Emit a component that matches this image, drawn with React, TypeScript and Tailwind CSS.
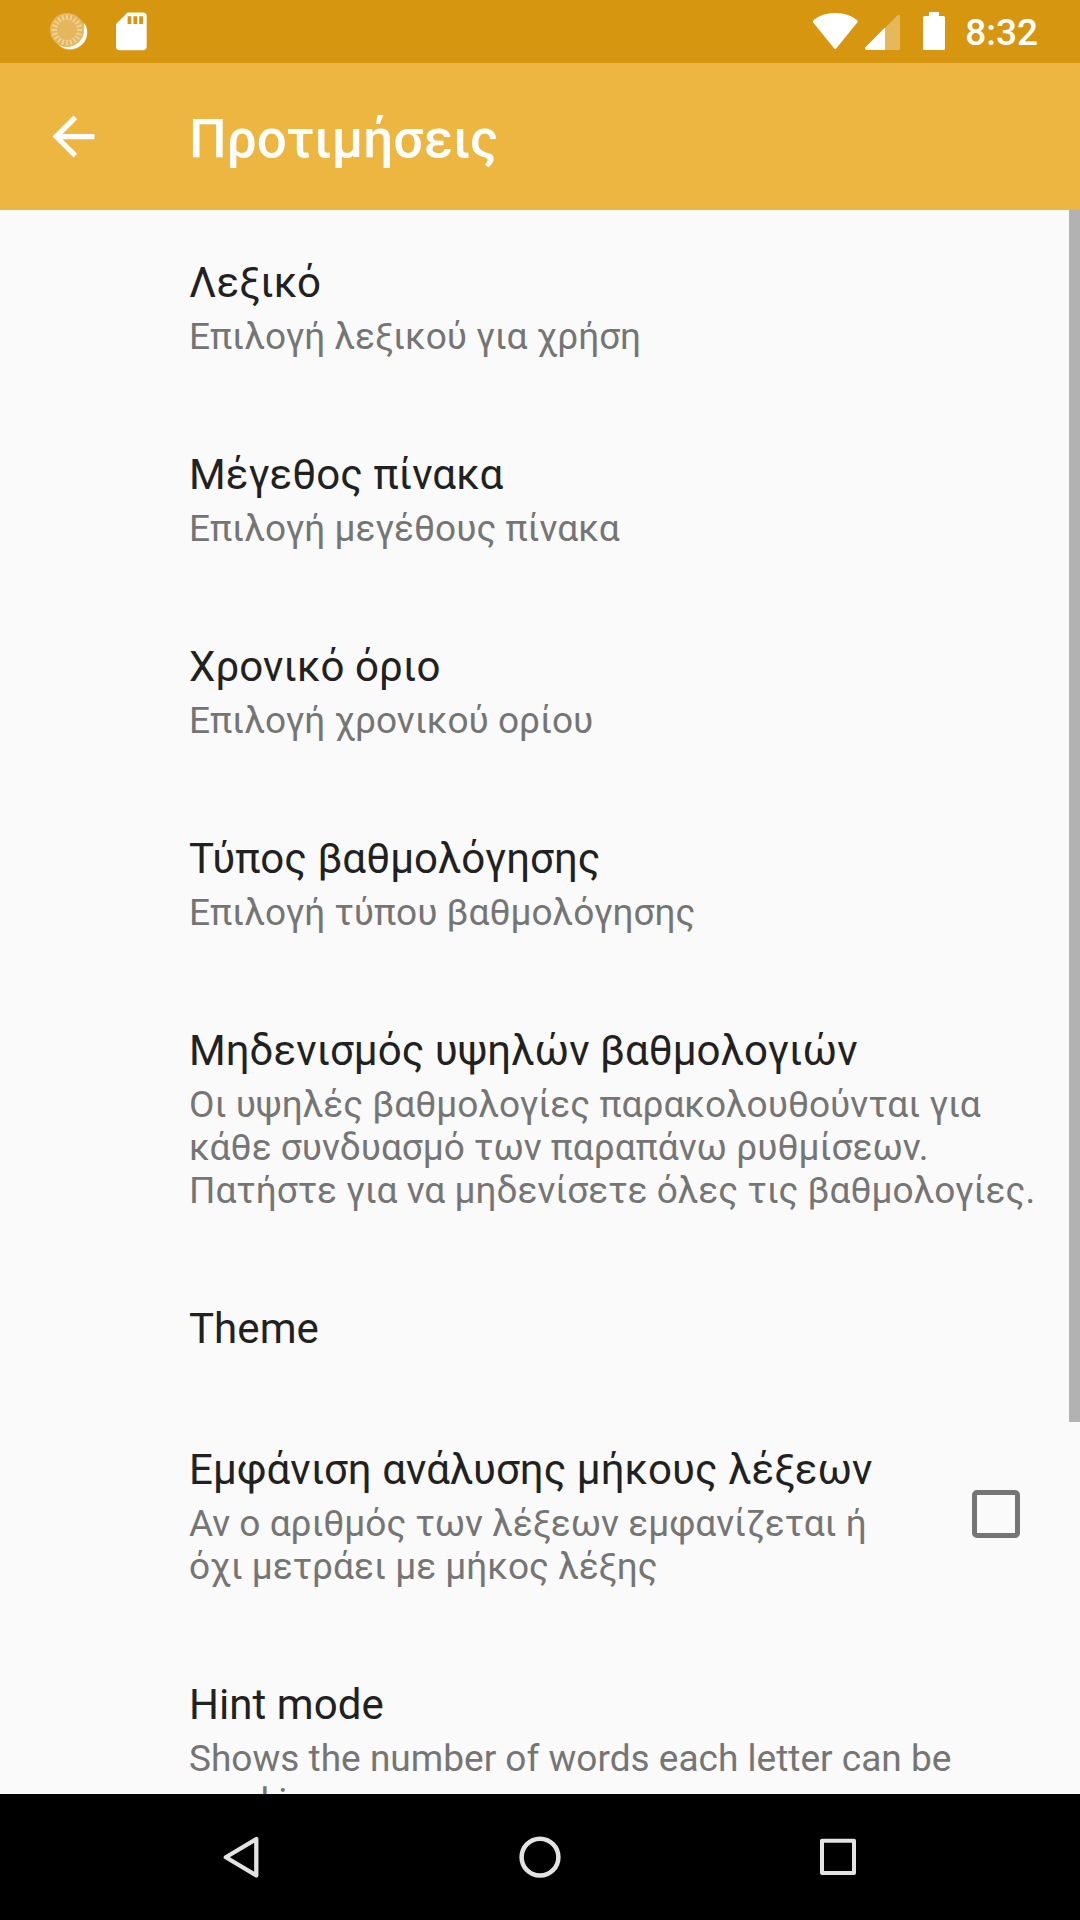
import React from "react";

type Item = { title: string; lines?: string[]; check?: boolean };

const items: Item[] = [
  { title: "Λεξικό", lines: ["Επιλογή λεξικού για χρήση"] },
  { title: "Μέγεθος πίνακα", lines: ["Επιλογή μεγέθους πίνακα"] },
  { title: "Χρονικό όριο", lines: ["Επιλογή χρονικού ορίου"] },
  { title: "Τύπος βαθμολόγησης", lines: ["Επιλογή τύπου βαθμολόγησης"] },
  {
    title: "Μηδενισμός υψηλών βαθμολογιών",
    lines: [
      "Οι υψηλές βαθμολογίες παρακολουθούνται για",
      "κάθε συνδυασμό των παραπάνω ρυθμίσεων.",
      "Πατήστε για να μηδενίσετε όλες τις βαθμολογίες.",
    ],
  },
  { title: "Theme" },
  {
    title: "Εμφάνιση ανάλυσης μήκους λέξεων",
    lines: ["Αν ο αριθμός των λέξεων εμφανίζεται ή", "όχι μετράει με μήκος λέξης"],
    check: true,
  },
  { title: "Hint mode", lines: ["Shows the number of words each letter can be", "used in"] },
];

const rays = Array.from({ length: 20 }, (_, i) => i * 18);

function Row({ item }: { item: Item }) {
  return (
    <div className="flex shrink-0 items-center pl-[189px] pr-[49px]">
      <div className="min-w-0 flex-1 pt-[48px] pb-[43px] whitespace-nowrap">
        <div className="h-[50px] text-[42px] leading-[50px] tracking-[0.06px] text-[#212121]">{item.title}</div>
        {item.lines && (
          <div className="pt-[7px] pb-px text-[37px] leading-[43px] tracking-[0.01px] text-[#757575]">
            {item.lines.map((l) => (
              <div key={l}>{l}</div>
            ))}
          </div>
        )}
      </div>
      {item.check && <div className="mb-[1px] h-[48px] w-[48px] shrink-0 rounded-[5px] border-[5px] border-[#757575]" />}
    </div>
  );
}

export default function App() {
  return (
    <div className="flex h-[1920px] w-[1080px] flex-col overflow-hidden bg-[#fafafa] font-['Roboto',sans-serif]">
      <div className="flex h-[63px] shrink-0 items-center bg-[#d7960f] pl-[48px] pr-[42px] text-white">
        <svg width="42" height="63" viewBox="48 0 42 63">
          <circle cx="70" cy="33" r="17" fill="#e3b55a" />
          <path fill="#fff" d="M84.5 23A17 17 0 0 1 59 45Q80 50 84.5 23Z" />
          <circle cx="67" cy="30" r="17" fill="#e5b75d" />
          {rays.map((a) => (
            <path key={a} d="M67 14.5V20" stroke="#efd39a" strokeWidth="1.8" transform={`rotate(${a} 67 30)`} />
          ))}
        </svg>
        <svg className="ml-[26px]" width="31" height="63" viewBox="116 0 31 63">
          <path
            fill="#fff"
            fillRule="evenodd"
            d="M127.5 12.5H143Q146.7 12.5 146.7 16.2V46.6Q146.7 50.3 143 50.3H119.7Q116 50.3 116 46.6V24ZM127.6 16.2V24H131.4V16.2ZM133.4 16.2V24H137.2V16.2ZM139.2 16.2V24H143V16.2Z"
          />
        </svg>
        <div className="flex-1" />
        <svg className="shrink-0" width="145" height="63" viewBox="810 0 145 63">
          <path
            fill="#fff"
            d="M813.2 22.6Q812.3 21.3 813.6 20.1Q822 13 835.2 13Q848.5 13 856.9 20.1Q858.2 21.3 857.3 22.6L836.4 48.3Q835.2 49.6 834 48.3Z"
          />
          <path fill="#e5b85c" d="M885 28L897.5 15.3Q900 13.7 900 16.5V48.5Q900 50 898.5 50H885Z" />
          <path fill="#fff" d="M885 27.5V50H866.5Q864.3 49.5 865.4 47.2Z" />
          <path
            fill="#fff"
            d="M929 12H939V16H943.5Q945 16 945 17.5V48.5Q945 50 943.5 50H924.5Q923 50 923 48.5V17.5Q923 16 924.5 16H929Z"
          />
        </svg>
        <div className="pl-[10px] pt-[3px] text-[37px] font-medium">8:32</div>
      </div>
      <div className="flex h-[147px] shrink-0 items-center bg-[#ecb640] pl-[42px] text-white">
        <svg width="63" height="63" viewBox="0 0 24 24">
          <path fill="#fff" d="M20 11H7.83l5.59-5.59L12 4l-8 8 8 8 1.41-1.41L7.83 13H20v-2z" />
        </svg>
        <div className="pl-[84px] pt-[6px] text-[53px] font-medium tracking-[0.1px]">Προτιμήσεις</div>
      </div>
      <div className="flex h-[1584px] shrink-0 justify-between overflow-hidden">
        <div className="flex min-w-0 flex-1 flex-col">
          {items.map((i) => (
            <Row key={i.title} item={i} />
          ))}
        </div>
        <div className="h-[1212px] w-[11px] shrink-0 bg-[#b2b2b2]" />
      </div>
      <div className="flex h-[126px] shrink-0 items-center justify-between bg-black px-[212px]">
        <svg width="60" height="60" viewBox="212 1827 60 60" fill="none" stroke="#e3e3e3" strokeWidth="4.3" strokeLinejoin="round">
          <path d="M256.3 1839V1875.5L225.8 1857.25Z" />
        </svg>
        <svg width="60" height="60" viewBox="0 0 60 60" fill="none" stroke="#e3e3e3" strokeWidth="4.5">
          <circle cx="30" cy="30.2" r="18.4" />
        </svg>
        <svg width="60" height="60" viewBox="0 0 60 60" fill="none" stroke="#e3e3e3" strokeWidth="4" strokeLinejoin="round">
          <path d="M14 13.8H46V46H14Z" />
        </svg>
      </div>
    </div>
  );
}
